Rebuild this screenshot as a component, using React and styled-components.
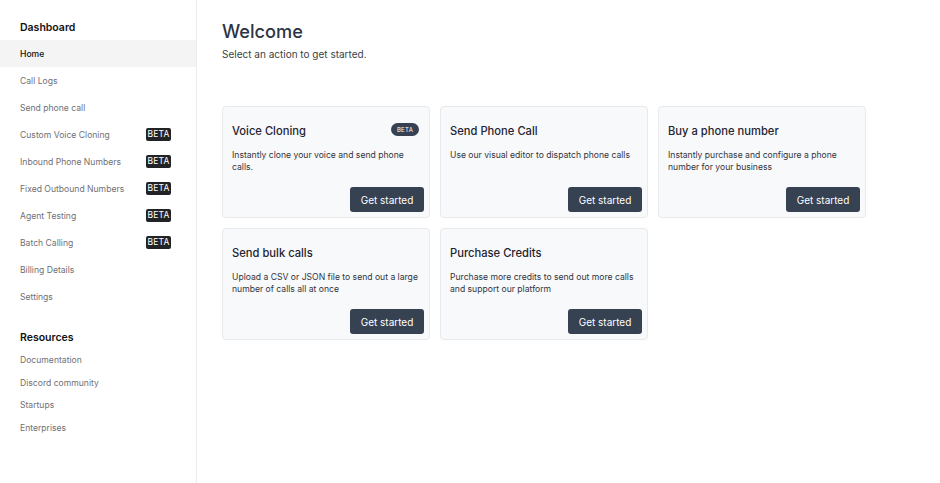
import React from "react";
import styled, { createGlobalStyle } from "styled-components";

const Global = createGlobalStyle`
  html, body { margin: 0; padding: 0; background: #fff; }
  body { font-family: Inter, "Noto Sans", sans-serif; -webkit-font-smoothing: antialiased; }
  * { box-sizing: border-box; }
`;

const Layout = styled.div`
  display: flex;
  width: 940px;
  height: 483px;
`;

const Sidebar = styled.nav`
  width: 197px;
  flex-shrink: 0;
  border-right: 1px solid #ececee;
  padding-top: 21px;
  display: flex;
  flex-direction: column;
`;

const SectionTitle = styled.div`
  font-size: 10.5px;
  font-weight: 600;
  color: #111;
  line-height: 14px;
  padding-left: 20px;
  margin-top: ${(p) => p.$top || 0}px;
  margin-bottom: ${(p) => p.$bottom || 0}px;
`;

const NavItem = styled.div`
  display: flex;
  align-items: center;
  justify-content: space-between;
  height: ${(p) => p.$h}px;
  padding: 0 25px 0 20px;
  font-size: 8.6px;
  color: ${(p) => (p.$active ? "#111" : "#707075")};
  font-weight: ${(p) => (p.$active ? 500 : 400)};
  background: ${(p) => (p.$active ? "#f4f4f5" : "transparent")};
`;

const Beta = styled.span`
  background: #222326;
  color: #fff;
  font-size: 8.5px;
  line-height: 13px;
  height: 13px;
  width: 25px;
  text-align: center;
  border-radius: 2px;
  letter-spacing: 0.2px;
`;

const Main = styled.main`
  flex: 1;
  padding: 19px 0 0 25px;
`;

const Heading = styled.h1`
  margin: 0;
  font-size: 18.2px;
  font-weight: 500;
  color: #2d3443;
  line-height: 24px;
`;

const Subtitle = styled.p`
  margin: 4px 0 0;
  font-size: 10px;
  color: #3b3f48;
  line-height: 14px;
`;

const Grid = styled.div`
  display: grid;
  grid-template-columns: repeat(3, 208px);
  grid-auto-rows: 112px;
  gap: 10px;
  margin-top: 45px;
`;

const Card = styled.div`
  position: relative;
  background: #f8f9fb;
  border: 1px solid #e7e9ec;
  border-radius: 4px;
  padding: 16px 10px 0 9px;
  display: flex;
  flex-direction: column;
`;

const CardHead = styled.div`
  display: flex;
  align-items: center;
  justify-content: space-between;
`;

const CardTitle = styled.h2`
  margin: 0;
  font-size: 11.2px;
  font-weight: 500;
  color: #1f2430;
  line-height: 16px;
`;

const Pill = styled.span`
  background: #364152;
  color: #fff;
  font-size: 6px;
  letter-spacing: 0.3px;
  height: 13px;
  line-height: 13px;
  width: 28px;
  text-align: center;
  border-radius: 7px;
  margin-top: -3px;
`;

const Desc = styled.p`
  margin: 10px 0 0;
  font-size: 8.6px;
  color: #30343d;
  line-height: 12px;
  width: 190px;
`;

const Button = styled.button`
  position: absolute;
  right: 5px;
  bottom: 5px;
  width: 74px;
  height: 25px;
  border: none;
  border-radius: 3px;
  background: #364152;
  color: #fff;
  font-family: inherit;
  font-size: 10px;
  padding: 0;
`;

const dashboard = [
  { label: "Home", active: true },
  { label: "Call Logs" },
  { label: "Send phone call" },
  { label: "Custom Voice Cloning", beta: true },
  { label: "Inbound Phone Numbers", beta: true },
  { label: "Fixed Outbound Numbers", beta: true },
  { label: "Agent Testing", beta: true },
  { label: "Batch Calling", beta: true },
  { label: "Billing Details" },
  { label: "Settings" },
];

const resources = ["Documentation", "Discord community", "Startups", "Enterprises"];

const cards = [
  { title: "Voice Cloning", beta: true, desc: "Instantly clone your voice and send phone calls." },
  { title: "Send Phone Call", desc: "Use our visual editor to dispatch phone calls" },
  { title: "Buy a phone number", desc: "Instantly purchase and configure a phone number for your business" },
  { title: "Send bulk calls", desc: "Upload a CSV or JSON file to send out a large number of calls all at once" },
  { title: "Purchase Credits", desc: "Purchase more credits to send out more calls and support our platform" },
];

export default function App() {
  return (
    <>
      <Global />
      <Layout>
        <Sidebar>
          <SectionTitle $bottom={5}>Dashboard</SectionTitle>
          {dashboard.map((d) => (
            <NavItem key={d.label} $h={27} $active={d.active}>
              <span>{d.label}</span>
              {d.beta && <Beta>BETA</Beta>}
            </NavItem>
          ))}
          <SectionTitle $top={21} $bottom={4}>Resources</SectionTitle>
          {resources.map((r) => (
            <NavItem key={r} $h={22.5}>
              <span>{r}</span>
            </NavItem>
          ))}
        </Sidebar>
        <Main>
          <Heading>Welcome</Heading>
          <Subtitle>Select an action to get started.</Subtitle>
          <Grid>
            {cards.map((c) => (
              <Card key={c.title}>
                <CardHead>
                  <CardTitle>{c.title}</CardTitle>
                  {c.beta && <Pill>BETA</Pill>}
                </CardHead>
                <Desc>{c.desc}</Desc>
                <Button>Get started</Button>
              </Card>
            ))}
          </Grid>
        </Main>
      </Layout>
    </>
  );
}
